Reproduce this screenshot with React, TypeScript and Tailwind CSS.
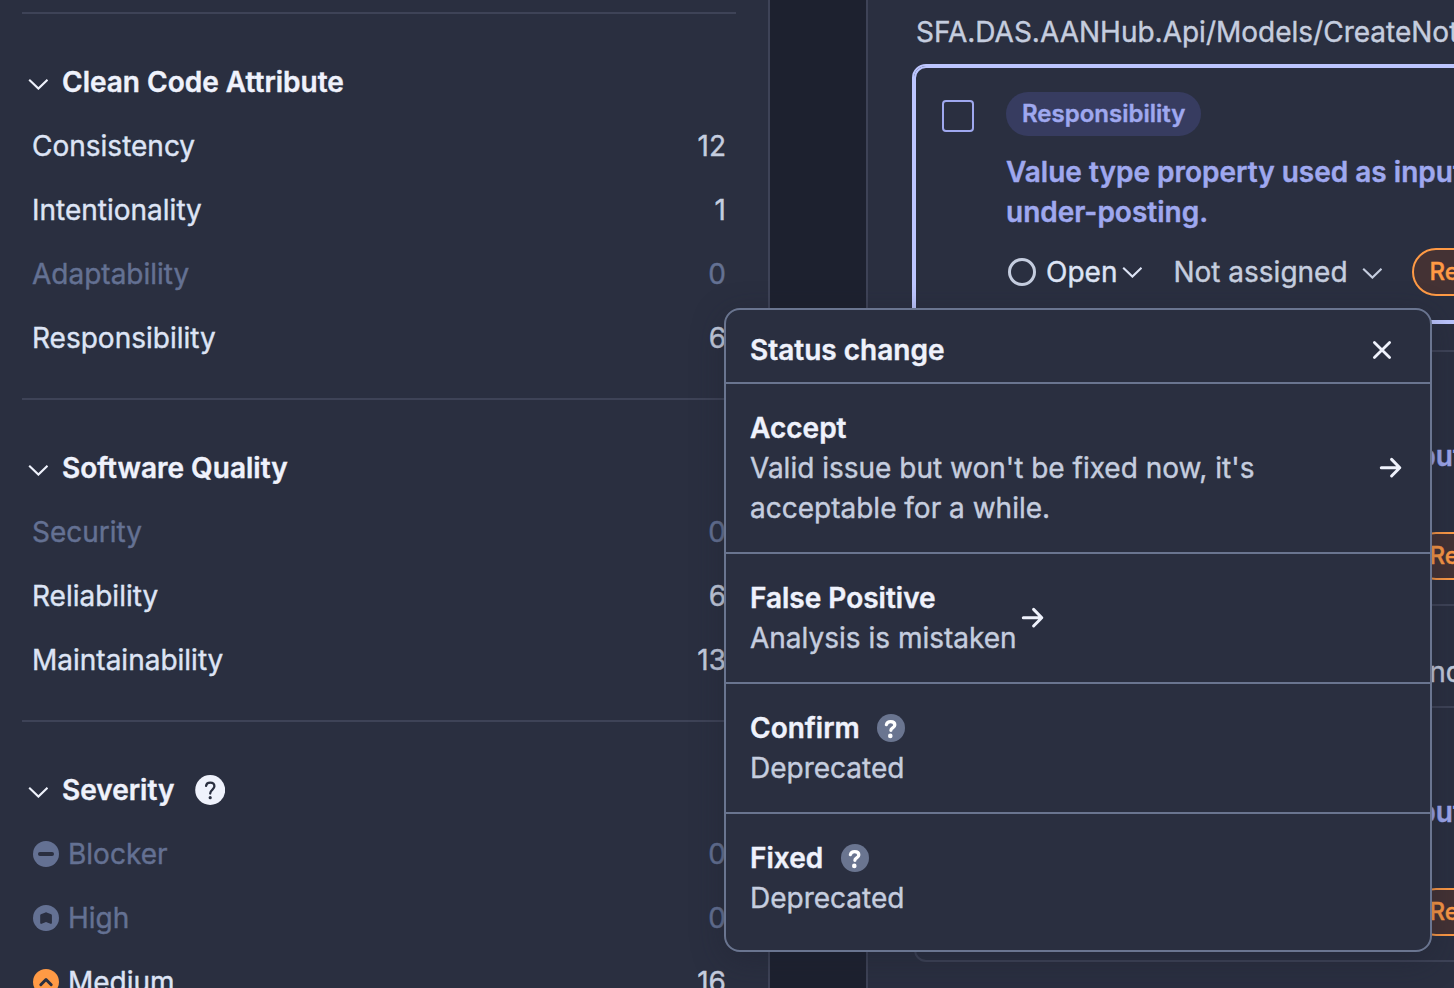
import React from "react";

const Chevron = ({ className = "" }: { className?: string }) => (
  <svg viewBox="0 0 20 12" className={`h-3 w-5 shrink-0 ${className}`} fill="none" stroke="currentColor" strokeWidth="2.1">
    <path d="M1.2 1.8 10.4 10.6 19.5 1.8" />
  </svg>
);

const Arrow = ({ className = "" }: { className?: string }) => (
  <svg viewBox="0 0 24 24" className={`size-6 shrink-0 text-[#eff2fc] ${className}`} fill="none" stroke="currentColor" strokeWidth="3" strokeLinecap="round" strokeLinejoin="round">
    <path d="M2.3 11.7H20.6M12.6 3.4 20.8 11.7 12.6 20" />
  </svg>
);

const Help = ({ className = "" }: { className?: string }) => (
  <svg viewBox="0 0 28 28" className={`size-7 shrink-0 ${className}`}>
    <circle cx="14" cy="14" r="14" fill="#6a7590" />
    <path d="M9.4 10.6C10 8.6 11.6 7.7 13.6 7.7c2.5 0 4.2 1.2 4.2 3.3 0 2.9-3.9 2.9-3.9 5.3" fill="none" stroke="#fff" strokeWidth="3.3" strokeLinecap="round" />
    <circle cx="13.3" cy="21.9" r="2.3" fill="#fff" />
  </svg>
);

const HelpLight = () => (
  <svg viewBox="0 0 30 30" className="ml-[21px] size-[30px] shrink-0">
    <circle cx="15.2" cy="15" r="15" fill="#eff2fc" />
    <path d="M11.1 10.9C11.3 8.9 12.9 7.7 15.2 7.7c2.4 0 4.2 1.4 4.2 3.6 0 3.3-4.2 3.2-4.2 7.3" fill="none" stroke="#2a2f40" strokeWidth="2.3" strokeLinecap="round" />
    <circle cx="15.2" cy="22.7" r="1.6" fill="#2a2f40" />
  </svg>
);

const SeverityIcon = ({ kind }: { kind: string }) => (
  <svg viewBox="0 0 26 26" className={`mr-[9px] ml-px size-[26px] shrink-0 ${kind === "Medium" ? "text-[#ff9a45]" : "text-[#647193]"}`}>
    <circle cx="13" cy="13" r="13" fill="currentColor" />
    {kind === "Blocker" && <rect x="5" y="11" width="16" height="4" rx="2" fill="#2a2f40" />}
    {kind === "High" && <path d="M7.2 10.4c0-.6.2-1 .7-1.2L12.5 7.4c.4-.2.7-.2 1.1 0l4.6 1.8c.5.2.7.6.7 1.2v7.4c0 .9-.6 1.3-1.4 1L13 17 8.6 18.8c-.8.3-1.4-.1-1.4-1Z" fill="#2a2f40" />}
    {kind === "Medium" && <path d="M7.8 15.7 13 10.5l5.2 5.2" fill="none" stroke="#2a2f40" strokeWidth="3" strokeLinecap="round" strokeLinejoin="round" />}
  </svg>
);

type Row = { name: string; count: number };

const facets: { title: string; help?: boolean; icons?: boolean; rows: Row[] }[] = [
  {
    title: "Clean Code Attribute",
    rows: [
      { name: "Consistency", count: 12 },
      { name: "Intentionality", count: 1 },
      { name: "Adaptability", count: 0 },
      { name: "Responsibility", count: 6 },
    ],
  },
  {
    title: "Software Quality",
    rows: [
      { name: "Security", count: 0 },
      { name: "Reliability", count: 6 },
      { name: "Maintainability", count: 13 },
    ],
  },
  {
    title: "Severity",
    help: true,
    icons: true,
    rows: [
      { name: "Blocker", count: 0 },
      { name: "High", count: 0 },
      { name: "Medium", count: 16 },
    ],
  },
];

function IssueCard({ selected = false }: { selected?: boolean }) {
  return (
    <div className={`h-64 w-[900px] rounded-xl border-2 pt-6 pl-[90px] ${selected ? "border-[#bdc6ff] outline-2 outline-[#bdc6ff]" : "border-[#3e4357]"} relative`}>
      <span className="absolute top-8 left-[26px] size-8 rounded-[4px] border-2 border-[#9fa8ef]" />
      <span className="flex h-11 w-fit items-center rounded-full bg-[#373c60] px-4 text-[24px] font-semibold text-[#9fa8ef]">Responsibility</span>
      <p className="mt-4 font-semibold whitespace-nowrap text-[#9fa8ef]">
        Value type property used as input in a controller
        <br />
        under-posting.
      </p>
      <div className="mt-4 flex h-12 items-center whitespace-nowrap">
        <span className="mr-2.5 ml-0.5 size-7 rounded-full border-[3px] border-[#c5cddf]" />
        <span className="text-[#dde4f5]">Open</span>
        <Chevron className="ml-[5px] text-[#dde4f5]" />
        <span className="ml-[31px] text-[#c5cddf]">Not assigned</span>
        <Chevron className="mt-0.5 ml-3.5 text-[#c5cddf]" />
        <span className="ml-[30px] flex h-12 items-center rounded-full border-2 border-[#ff9a45] bg-[#443234] px-4 text-[24px] font-medium text-[#ff9a45]">Reliability</span>
      </div>
    </div>
  );
}

function StatusItem({ title, text, arrow, help, last }: { title: string; text: string; arrow?: boolean; help?: boolean; last?: boolean }) {
  return (
    <div className={`flex items-center px-6 py-6 ${last ? "" : "border-b-2 border-[#6a7590]"}`}>
      <div className="max-w-[560px]">
        <div className="flex h-10 items-center font-semibold text-[#eff2fc]">
          {title}
          {help && <Help className="ml-[17.5px]" />}
        </div>
        <p className="text-[#c5cddf]">{text}</p>
      </div>
      {arrow && <Arrow className={title === "Accept" ? "mr-[3px] ml-auto" : "ml-1"} />}
    </div>
  );
}

export default function App() {
  return (
    <div className="relative flex h-[988px] w-[1454px] overflow-hidden bg-[#1d212f] font-['Inter',sans-serif] text-[28px] leading-10 [-webkit-text-stroke:0.4px] [font-optical-sizing:none]">
      <aside className="w-[770px] shrink-0 border-r-2 border-[#3e4357] bg-[#2a2f40] pt-3 pl-[22px]">
        {facets.map((f) => (
          <section key={f.title} className="w-[714px] border-t-2 border-[#3e4357] pt-12 pb-7">
            <h2 className="mb-3 flex h-10 items-center pl-1.5 font-semibold text-[#eff2fc]">
              <Chevron className="mt-1 mr-3.5" />
              {f.title}
              {f.help && <HelpLight />}
            </h2>
            {f.rows.map((r) => (
              <div key={r.name} className={`flex h-16 items-center pr-2.5 pl-2.5 ${r.count ? "text-[#dde4f5]" : "text-[#647193]"}`}>
                {f.icons && <SeverityIcon kind={r.name} />}
                <span>{r.name}</span>
                <span className={`ml-auto ${r.count ? "text-[#c5cddf]" : ""}`}>{r.count}</span>
              </div>
            ))}
          </section>
        ))}
      </aside>

      <main className="ml-24 w-[588px] shrink-0 overflow-hidden border-l-2 border-[#3e4357] bg-[#2a2f40] pt-3 pl-[46px]">
        <p className="mb-3.5 pl-0.5 whitespace-nowrap text-[#c5cddf]">SFA.DAS.AANHub.Api/Models/CreateNotificationModel.cs</p>
        <IssueCard selected />
        <div className="h-7" />
        <IssueCard />
        <p className="mt-[46px] mb-3.5 pl-1.5 whitespace-nowrap text-[#c5cddf]">SFA.DAS.AANHub.Api/Models/Commands</p>
        <IssueCard />
      </main>

      <div className="absolute top-[308px] left-[724px] w-[708px] rounded-2xl border-2 border-[#6a7590] bg-[#2a2f40] py-2 shadow-[0_8px_32px_rgba(29,33,47,0.4)]">
        <div className="flex h-[66px] items-center justify-between border-b-2 border-[#6a7590] pr-[38px] pl-6">
          <span className="font-semibold text-[#eff2fc]">Status change</span>
          <svg viewBox="0 0 20 20" className="size-5 text-[#eff2fc]" fill="none" stroke="currentColor" strokeWidth="2.8" strokeLinecap="round">
            <path d="M2.4 2.4 17.6 17.6M17.6 2.4 2.4 17.6" />
          </svg>
        </div>
        <StatusItem title="Accept" text="Valid issue but won't be fixed now, it's acceptable for a while." arrow />
        <StatusItem title="False Positive" text="Analysis is mistaken" arrow />
        <StatusItem title="Confirm" text="Deprecated" help />
        <StatusItem title="Fixed" text="Deprecated" help last />
      </div>
    </div>
  );
}
